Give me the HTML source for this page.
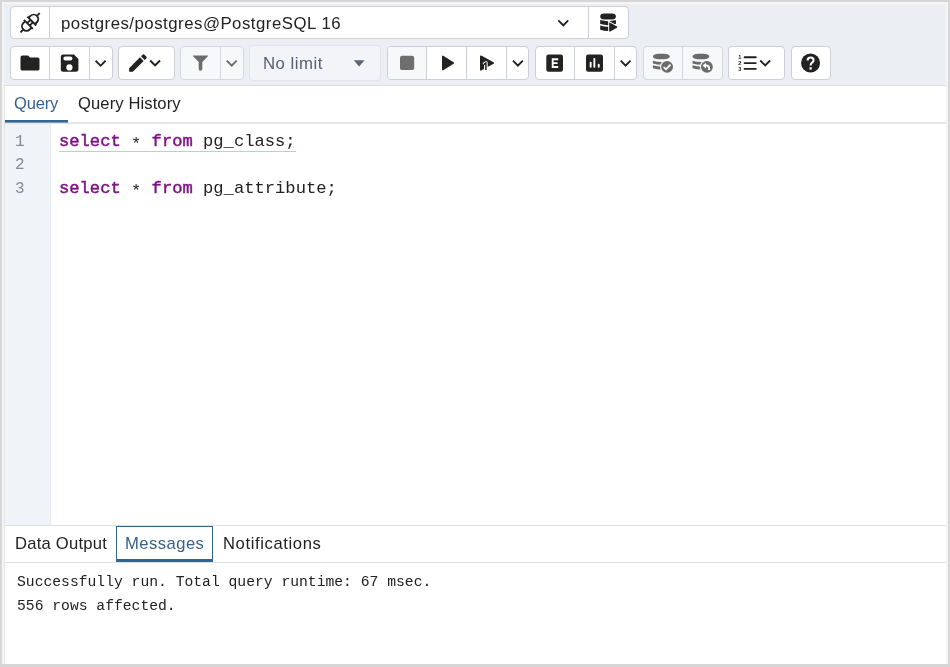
<!DOCTYPE html>
<html><head><meta charset="utf-8">
<style>
*{box-sizing:border-box;margin:0;padding:0}
html,body{width:950px;height:667px;overflow:hidden;background:#d6d6d6;font-family:"Liberation Sans",sans-serif;color:#222}
.a{position:absolute}
#win{position:absolute;left:2px;top:2px;width:946px;height:662px;background:#f4f5f7}
#content{position:absolute;left:4px;top:4px;width:942px;height:660px;background:#fff;border-left:1px solid #e2e4e6;overflow:hidden}
#toolbar{position:absolute;left:4px;top:4px;width:942px;height:82px;background:#ebeef3;border-bottom:1px solid #d9dce2}
.grp{position:absolute;border:1px solid #cbcfd6;border-radius:4px;background:#fff;overflow:hidden}
.grp.dis{background:#f7f8fa;border-color:#d3d6dc}
.dv{position:absolute;top:0;bottom:0;width:1px;background:#cbcfd6}
.dis .dv{background:#d3d6dc}
svg{position:absolute;overflow:visible}
.tab{will-change:transform;position:absolute;font-size:16.6px;line-height:20px;white-space:pre}
.code{will-change:transform;position:absolute;font-family:"Liberation Mono",monospace;font-size:17.15px;white-space:pre;line-height:20px}
.kw{color:#7f1284;font-weight:normal;-webkit-text-stroke:0.45px #7f1284}
.ast{position:relative;top:2.8px}
.ln{will-change:transform;position:absolute;font-family:"Liberation Mono",monospace;font-size:16px;color:#868a92;line-height:20px}
.msg{will-change:transform;position:absolute;font-family:"Liberation Mono",monospace;font-size:14.7px;white-space:pre;line-height:20px;color:#222}
</style></head><body>
<div id="win"></div>
<div id="content"></div>
<div id="toolbar"></div>

<!-- connection bar -->
<div class="grp" style="left:10px;top:6px;width:619px;height:33px">
  <div class="dv" style="left:38px"></div>
  <div class="dv" style="left:577px"></div>
</div>
<div class="tab" style="left:61px;top:14.1px;font-size:16.8px;letter-spacing:0.5px;color:#222">postgres/postgres@PostgreSQL 16</div>

<!-- row 2 -->
<div class="grp" style="left:10px;top:46px;width:103px;height:34px">
  <div class="dv" style="left:38px"></div>
  <div class="dv" style="left:78px"></div>
</div>
<div class="grp" style="left:118px;top:46px;width:57px;height:34px"></div>
<div class="grp dis" style="left:180px;top:46px;width:64px;height:34px">
  <div class="dv" style="left:39px"></div>
</div>
<div class="grp dis" style="left:249px;top:45px;width:132px;height:36px;border-color:#e1e4ea;background:#f2f4f8"></div>
<div class="tab" style="left:263px;top:53.5px;font-size:16.8px;letter-spacing:0.5px;color:#5b6070">No limit</div>
<div class="grp" style="left:387px;top:46px;width:142px;height:34px">
  <div class="grp dis" style="left:-1px;top:-1px;width:40px;height:34px;border:none;border-radius:0"></div>
  <div class="dv" style="left:38px"></div>
  <div class="dv" style="left:78px"></div>
  <div class="dv" style="left:118px"></div>
</div>
<div class="grp" style="left:535px;top:46px;width:102px;height:34px">
  <div class="dv" style="left:38px"></div>
  <div class="dv" style="left:78px"></div>
</div>
<div class="grp dis" style="left:643px;top:46px;width:80px;height:34px">
  <div class="dv" style="left:38px"></div>
</div>
<div class="grp" style="left:728px;top:46px;width:57px;height:34px"></div>
<div class="grp" style="left:791px;top:46px;width:40px;height:34px"></div>


<svg id="icons" class="a" style="left:0;top:0" width="950" height="667" viewBox="0 0 950 667">
<!-- plug -->
<g transform="translate(30.1,22.7) rotate(-45)" fill="none" stroke="#222" stroke-width="1.9">
  <path d="M-13.6 0H-9.6M9.6 0H13.6"/>
  <path d="M-2.6 -4.5H-5.1A4.5 4.5 0 0 0 -5.1 4.5H-2.6"/>
  <path d="M2.6 -4.5H5.1A4.5 4.5 0 0 1 5.1 4.5H2.6"/>
  <path d="M-2.4 -6.3V6.3M2.4 -6.3V6.3M-2.4 -1.7H2.4M-2.4 1.7H2.4"/>
</g>
<svg x="557.7" y="19.75" width="11.2" height="6.95" viewBox="6 8.59 12 7.41"><path fill="#222" d="M7.41 8.59 12 13.17l4.59-4.58L18 10l-6 6-6-6 1.41-1.41z"/></svg>
<!-- db play -->
<g fill="#222">
  <path fill="#222" d="M604.12 13.60H611.99A3.92 2.90 0 0 1 611.99 19.40H604.12A3.92 2.90 0 0 1 604.12 13.60ZM600.20 20.10Q608.05 22.30 615.90 20.10V24.10Q608.05 26.30 600.20 24.10ZM600.20 25.50Q608.05 27.90 615.90 25.50V29.70Q608.05 32.10 600.20 29.70Z"/>
  <path d="M608.2 20.6L620.4 27.2L608.2 34.2Z" fill="#fff"/>
  <path d="M609.9 23.3L616.6 27.1L609.9 30.9Z" stroke="#222" stroke-width="1.4" stroke-linejoin="round"/>
</g>
<!-- folder -->
<svg x="20.5" y="55.6" width="19" height="15" viewBox="2 4 20 16" preserveAspectRatio="none"><path fill="#222" d="M10 4H4c-1.1 0-1.99.9-1.99 2L2 18c0 1.1.9 2 2 2h16c1.1 0 2-.9 2-2V8c0-1.1-.9-2-2-2h-8l-2-2z"/></svg>
<!-- save -->
<g transform="translate(60.8,54.5)">
  <path fill="#222" d="M2.3 0H13.2L17.6 4.4V14.9Q17.6 17.2 15.3 17.2H2.3Q0 17.2 0 14.9V2.3Q0 0 2.3 0Z"/>
  <rect x="2.6" y="1.9" width="9" height="4" rx="2" fill="#fff"/>
  <circle cx="8.6" cy="12.9" r="3.1" fill="#fff"/>
</g>
<svg x="95" y="60.1" width="11.2" height="6.95" viewBox="6 8.59 12 7.41"><path fill="#222" d="M7.41 8.59 12 13.17l4.59-4.58L18 10l-6 6-6-6 1.41-1.41z"/></svg>
<!-- pencil -->
<svg x="126.2" y="51.3" width="23.5" height="23.5" viewBox="0 0 24 24"><path fill="#222" d="M3 17.25V21h3.75L17.81 9.94l-3.75-3.75L3 17.25zM20.71 7.04c.39-.39.39-1.02 0-1.41l-2.34-2.34a.9959.9959 0 0 0-1.41 0l-1.83 1.83 3.75 3.75 1.83-1.83z"/></svg>
<svg x="149.5" y="59.8" width="11.2" height="6.95" viewBox="6 8.59 12 7.41"><path fill="#222" d="M7.41 8.59 12 13.17l4.59-4.58L18 10l-6 6-6-6 1.41-1.41z"/></svg>
<!-- funnel -->
<path fill="#6c6c6c" d="M193.4 55.6H207.6Q208.4 55.6 207.9 56.3L202.3 62.1V69.0Q202.3 70.7 200.5 70.7Q198.7 70.7 198.7 69.0V62.1L193.1 56.3Q192.6 55.6 193.4 55.6Z"/>
<svg x="226.1" y="60" width="11.2" height="6.95" viewBox="6 8.59 12 7.41"><path fill="#6c6c6c" d="M7.41 8.59 12 13.17l4.59-4.58L18 10l-6 6-6-6 1.41-1.41z"/></svg>
<!-- no limit caret -->
<path fill="#5f6470" d="M353.7 60.2H364.6L359.15 66.6Z"/>
<!-- stop -->
<rect x="400" y="55.7" width="14.2" height="14.4" rx="2.2" fill="#6e6e6e"/>
<!-- play -->
<path d="M442.8 56.4L453.2 63L442.8 69.6Z" fill="#222" stroke="#222" stroke-width="1.6" stroke-linejoin="round"/>
<!-- exec cursor -->
<path d="M480.8 56.2L493.2 63L480.8 69.8Z" fill="#222" stroke="#222" stroke-width="1.6" stroke-linejoin="round"/>
<path d="M483.6 64.6L485.9 62.9V70.0" fill="none" stroke="#fff" stroke-width="3.6" stroke-linejoin="round"/>
<path d="M483.6 64.6L485.9 62.9V70.0" fill="none" stroke="#222" stroke-width="1.5"/>
<svg x="512.3" y="60" width="11.2" height="6.95" viewBox="6 8.59 12 7.41"><path fill="#222" d="M7.41 8.59 12 13.17l4.59-4.58L18 10l-6 6-6-6 1.41-1.41z"/></svg>
<!-- explain E -->
<rect x="546.3" y="54.6" width="16.7" height="17.1" rx="2.2" fill="#222"/>
<path d="M558.2 59.2H552.7V67.0H558.2M552.7 63.1H557.6" fill="none" stroke="#fff" stroke-width="1.9"/>
<!-- analyze -->
<rect x="586" y="54.6" width="17" height="17.1" rx="2.2" fill="#222"/>
<path d="M590.65 62.6V66.8M594.35 59.0V66.8M598.75 64.8V66.8" fill="none" stroke="#fff" stroke-width="1.9" stroke-linecap="round"/>
<svg x="620" y="60" width="11.2" height="6.95" viewBox="6 8.59 12 7.41"><path fill="#222" d="M7.41 8.59 12 13.17l4.59-4.58L18 10l-6 6-6-6 1.41-1.41z"/></svg>
<!-- commit -->
<g fill="#6b6b6b">
  <path fill="#6b6b6b" d="M658.67 53.80H664.02A5.78 2.75 0 0 1 664.02 59.30H658.67A5.78 2.75 0 0 1 658.67 53.80ZM652.90 60.70Q661.35 63.30 669.80 60.70V63.50Q661.35 66.10 652.90 63.50ZM652.90 65.30Q661.35 67.90 669.80 65.30V68.30Q661.35 70.90 652.90 68.30Z"/>
  <circle cx="667.1" cy="66.85" r="7.1" fill="#f7f8fa"/>
  <circle cx="667.1" cy="66.85" r="5.95"/>
  <path d="M663.6 67.0L666.0 69.3L670.5 64.7" fill="none" stroke="#fff" stroke-width="1.7"/>
</g>
<!-- rollback -->
<g fill="#6b6b6b">
  <path fill="#6b6b6b" d="M698.27 53.80H703.62A5.78 2.75 0 0 1 703.62 59.30H698.27A5.78 2.75 0 0 1 698.27 53.80ZM692.50 60.70Q700.95 63.30 709.40 60.70V63.50Q700.95 66.10 692.50 63.50ZM692.50 65.30Q700.95 67.90 709.40 65.30V68.30Q700.95 70.90 692.50 68.30Z"/>
  <circle cx="706.9" cy="66.85" r="7.1" fill="#f7f8fa"/>
  <circle cx="706.9" cy="66.85" r="5.95"/>
  <path d="M706.0 62.7L702.6 65.6L706.0 68.5Z" fill="#fff"/>
  <path d="M704.8 65.6H706.3Q709.1 65.6 709.1 68.4V70.1" fill="none" stroke="#fff" stroke-width="2"/>
</g>
<!-- macros -->
<path d="M744.6 57.3H755.8M744.6 63.1H755.8M744.6 68.9H755.8" stroke="#222" stroke-width="1.9" stroke-linecap="round"/>
<text x="738.2" y="58.9" font-family="Liberation Sans" font-weight="bold" font-size="5.6" fill="#222">1</text>
<text x="738.2" y="64.7" font-family="Liberation Sans" font-weight="bold" font-size="5.6" fill="#222">2</text>
<text x="738.2" y="70.5" font-family="Liberation Sans" font-weight="bold" font-size="5.6" fill="#222">3</text>
<svg x="759.6" y="59.8" width="11.2" height="6.95" viewBox="6 8.59 12 7.41"><path fill="#222" d="M7.41 8.59 12 13.17l4.59-4.58L18 10l-6 6-6-6 1.41-1.41z"/></svg>
<!-- help -->
<circle cx="810.55" cy="62.95" r="9.5" fill="#222"/>
<path d="M807.6 60.6Q807.6 57.6 810.6 57.6Q813.6 57.6 813.6 60.3Q813.6 61.8 811.8 62.8Q810.6 63.6 810.6 65.4" fill="none" stroke="#fff" stroke-width="2"/>
<rect x="809.5" y="67.2" width="2.2" height="2.4" fill="#fff"/>
</svg>

<!-- tabs -->
<div class="a" style="left:5px;top:122px;width:941px;height:2px;background:#e4e6e9"></div>
<div class="a" style="left:5px;top:120px;width:63px;height:2px;background:#326690"></div>
<div class="a" style="left:5px;top:122px;width:63px;height:1px;background:#7d98b0"></div>
<div class="tab" style="left:13.9px;top:94.2px;letter-spacing:-0.2px;color:#36628a">Query</div>
<div class="tab" style="left:78px;top:94.2px;letter-spacing:0.1px;color:#222">Query History</div>

<!-- editor -->
<div class="a" style="left:5px;top:124px;width:46px;height:401px;background:#f0f3f8;border-right:1px solid #e8ebf0"></div>
<div class="ln" style="left:15px;top:131.7px">1</div>
<div class="ln" style="left:15px;top:155.2px">2</div>
<div class="ln" style="left:15px;top:178.7px">3</div>
<div class="code" style="left:59px;top:132.2px"><span class="kw">select</span> <span class="ast">*</span> <span class="kw">from</span> pg_class;</div>
<div class="a" style="left:59px;top:151px;width:237px;height:1px;background:#bccdd5"></div>
<div class="code" style="left:59px;top:179.2px"><span class="kw">select</span> <span class="ast">*</span> <span class="kw">from</span> pg_attribute;</div>

<!-- bottom tabs -->
<div class="a" style="left:5px;top:525px;width:941px;height:1px;background:#dcdee2"></div>
<div class="a" style="left:5px;top:562px;width:941px;height:1px;background:#dcdee2"></div>
<div class="tab" style="left:14.5px;top:533.7px;letter-spacing:0.24px">Data Output</div>
<div class="a" style="left:116px;top:526px;width:97px;height:36px;border:1px solid #33648c;border-bottom-width:3px"></div>
<div class="tab" style="left:125px;top:533.7px;letter-spacing:0.47px;color:#36628a">Messages</div>
<div class="tab" style="left:223px;top:533.7px;letter-spacing:0.62px">Notifications</div>

<div class="msg" style="left:17px;top:572.1px">Successfully run. Total query runtime: 67 msec.</div>
<div class="msg" style="left:17px;top:596.1px">556 rows affected.</div>

</body></html>
